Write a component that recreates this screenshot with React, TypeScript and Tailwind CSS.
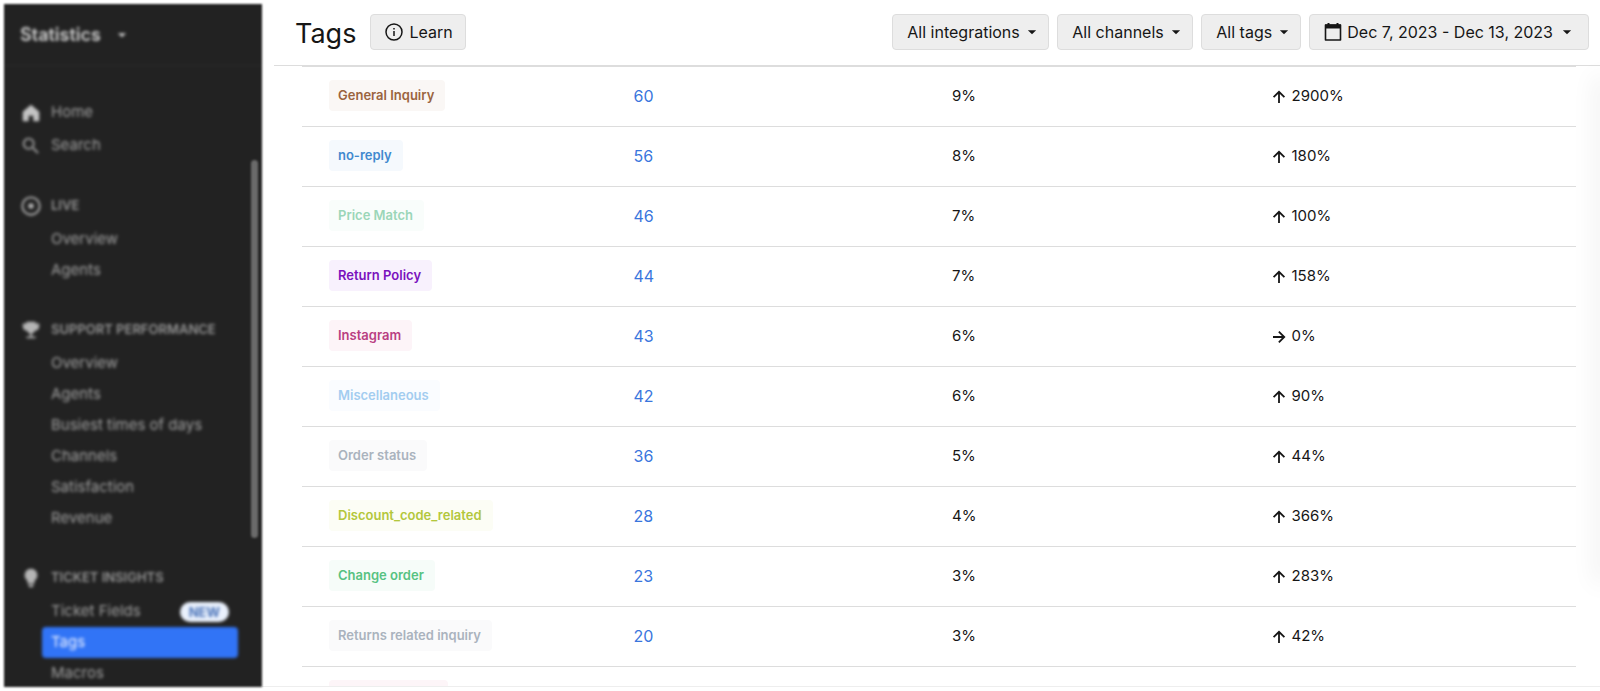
import type { ReactNode } from "react"

type Trend = "up" | "flat"

const tags: { name: string; chip: string; total: number; share: string; trend: Trend; delta: string }[] = [
  { name: "General Inquiry", chip: "text-[#9a6440] bg-[#faf7f5]", total: 60, share: "9%", trend: "up", delta: "2900%" },
  { name: "no-reply", chip: "text-[#4189cf] bg-[#f5f9fd]", total: 56, share: "8%", trend: "up", delta: "180%" },
  { name: "Price Match", chip: "text-[#9bd6b8] bg-[#f9fdfb]", total: 46, share: "7%", trend: "up", delta: "100%" },
  { name: "Return Policy", chip: "text-[#7b12bd] bg-[#f8f1fd]", total: 44, share: "7%", trend: "up", delta: "158%" },
  { name: "Instagram", chip: "text-[#b93f82] bg-[#fdf4f8]", total: 43, share: "6%", trend: "flat", delta: "0%" },
  { name: "Miscellaneous", chip: "text-[#a3cdf0] bg-[#fafcff]", total: 42, share: "6%", trend: "up", delta: "90%" },
  { name: "Order status", chip: "text-[#aab3be] bg-[#fafafb]", total: 36, share: "5%", trend: "up", delta: "44%" },
  { name: "Discount_code_related", chip: "text-[#b3c73c] bg-[#fcfdf5]", total: 28, share: "4%", trend: "up", delta: "366%" },
  { name: "Change order", chip: "text-[#57c282] bg-[#f6fcf9]", total: 23, share: "3%", trend: "up", delta: "283%" },
  { name: "Returns related inquiry", chip: "text-[#aab3be] bg-[#fafafb]", total: 20, share: "3%", trend: "up", delta: "42%" },
]

const CaretIcon = ({ className = "" }: { className?: string }) => (
  <svg viewBox="0 0 24 24" fill="currentColor" className={`size-[18px] shrink-0 ${className}`} aria-hidden="true">
    <path d="M6.5 9.5h11L12 15z" />
  </svg>
)

const ArrowIcon = ({ trend }: { trend: Trend }) => (
  <svg viewBox="0 0 24 24" fill="none" stroke="currentColor" strokeWidth="2.4" className="size-[18px] shrink-0" aria-hidden="true">
    {trend === "up" ? <path d="M12 20V5.5M4.8 12.2 12 5l7.2 7.2" /> : <path d="M4 12h14.5M11.8 4.8 19 12l-7.2 7.2" />}
  </svg>
)

const Glyph = ({ children }: { children: ReactNode }) => (
  <svg viewBox="0 0 24 24" fill="currentColor" className="size-[22px] shrink-0" aria-hidden="true">
    {children}
  </svg>
)

const FilterSelect = ({ label }: { label: string }) => (
  <div className="grid items-center">
    <select aria-label={label} className="col-start-1 row-start-1 h-9 appearance-none rounded border border-[#dddddd] bg-[#eeeeee] pl-3.5 pr-7 text-base">
      <option>{label}</option>
    </select>
    <CaretIcon className="pointer-events-none col-start-1 row-start-1 mr-2 justify-self-end" />
  </div>
)

const NavGroup = ({ title, icon, children }: { title: string; icon: ReactNode; children: ReactNode }) => (
  <section className="mt-[26px]">
    <h2 className="flex h-9 items-center gap-[9px] pl-4 text-[13px] font-semibold text-[#969696]">
      <span className="text-[#b5b5b5]">
        <Glyph>{icon}</Glyph>
      </span>
      {title}
    </h2>
    <ul>{children}</ul>
  </section>
)

const NavItem = ({ label, active, badge }: { label: string; active?: boolean; badge?: string }) => (
  <li className="pl-[38px] pr-6">
    <a
      href="#"
      className={`flex h-[31px] items-center justify-between rounded px-[9px] ${active ? "bg-[#3174f6] text-[#f0f4ff]" : "text-[#a0a0a0]"}`}
    >
      {label}
      {badge && <span className="rounded-full bg-[#eaf1fd] px-[9px] text-[13px] leading-5 font-bold text-[#4a73b8]">{badge}</span>}
    </a>
  </li>
)

const Sidebar = () => (
  <aside className="relative flex w-[258px] shrink-0 flex-col overflow-hidden bg-[#222222] text-[15px] blur-[1px]">
    <button type="button" className="flex h-[62px] w-full shrink-0 items-center gap-3 border-b border-[#2c2c2c] pl-4 text-lg font-semibold text-[#d2d2d2] blur-[1px]">
      Statistics
      <CaretIcon />
    </button>
    <nav className="pt-[30px] blur-[1px]">
      <a href="#" className="flex h-[33px] items-center gap-[9px] pl-4 text-[#a0a0a0]">
        <span className="text-[#c4c4c4]">
          <Glyph>
            <path d="M12 3 3 10.5V21h6.5v-6h5v6H21V10.5z" />
          </Glyph>
        </span>
        Home
      </a>
      <a href="#" className="flex h-[33px] items-center gap-[9px] pl-4 text-[#a0a0a0]">
        <Glyph>
          <path d="M15.5 14h-.8l-.3-.3A6.5 6.5 0 1 0 13.7 14.4l.3.3v.8l5 5 1.5-1.5zM9.5 14a4.5 4.5 0 1 1 0-9 4.5 4.5 0 0 1 0 9z" />
        </Glyph>
        Search
      </a>
      <NavGroup
        title="LIVE"
        icon={
          <>
            <circle cx="12" cy="12" r="9.5" fill="none" stroke="currentColor" strokeWidth="2" />
            <circle cx="12" cy="12" r="3" />
          </>
        }
      >
        <NavItem label="Overview" />
        <NavItem label="Agents" />
      </NavGroup>
      <NavGroup
        title="SUPPORT PERFORMANCE"
        icon={<path d="M19 5h-2V3H7v2H3v3a5 5 0 0 0 4.400 4.900A5 5 0 0 0 11 15.900V19H7v2h10v-2h-4v-3.100a5 5 0 0 0 3.600-3A5 5 0 0 0 21 8V5z" />}
      >
        <NavItem label="Overview" />
        <NavItem label="Agents" />
        <NavItem label="Busiest times of days" />
        <NavItem label="Channels" />
        <NavItem label="Satisfaction" />
        <NavItem label="Revenue" />
      </NavGroup>
      <NavGroup
        title="TICKET INSIGHTS"
        icon={<path d="M12 2a7 7 0 0 0-4 12.7V17a1 1 0 0 0 1 1h6a1 1 0 0 0 1-1v-2.3A7 7 0 0 0 12 2zM9 19h6v1a1 1 0 0 1-1 1v1h-4v-1a1 1 0 0 1-1-1z" />}
      >
        <NavItem label="Ticket Fields" badge="NEW" />
        <NavItem label="Tags" active />
        <NavItem label="Macros" />
      </NavGroup>
    </nav>
    {/* scrollbar */}
    <div className="absolute top-[156px] right-1 h-[378px] w-[7px] rounded-full bg-[#6a6a6a]" />
  </aside>
)

const TopBar = () => (
  <header className="ml-3 flex h-[62px] shrink-0 items-center gap-2 border-b border-[#dddddd] pr-[11px] pb-1.5 pl-[21px]">
    <h1 className="mr-1.5 pt-1 text-[27px] leading-9">Tags</h1>
    <button type="button" className="flex h-9 items-center gap-1.5 rounded border border-[#dddddd] bg-[#eeeeee] pr-3 pl-3.5 text-base">
      <svg viewBox="0 0 18 18" fill="none" stroke="currentColor" strokeWidth="1.5" className="size-[18px]" aria-hidden="true">
        <circle cx="9" cy="9" r="8" />
        <path d="M9 8v5M9 5v1.5" />
      </svg>
      Learn
    </button>
    <div className="ml-auto flex items-center gap-2">
      <FilterSelect label="All integrations" />
      <FilterSelect label="All channels" />
      <FilterSelect label="All tags" />
      <button type="button" className="flex h-9 items-center gap-[5px] rounded border border-[#dddddd] bg-[#eeeeee] pr-3 pl-3.5 text-base">
        <svg viewBox="0 0 18 20" className="h-5 w-[18px]" aria-hidden="true">
          <path d="M1.500 3h15v15h-15z" fill="none" stroke="currentColor" strokeWidth="1.600" strokeLinejoin="round" />
          <path d="M1 2.500h16V6.500H1zM3.500 1h2v2h-2zM12.500 1h2v2h-2z" fill="currentColor" />
        </svg>
        Dec 7, 2023 - Dec 13, 2023
        <CaretIcon />
      </button>
    </div>
  </header>
)

const TagsTable = () => (
  <table aria-label="Tags" className="w-full table-fixed border-t border-[#dddddd] text-[15px]">
    <tbody>
      {tags.map((tag) => (
        <tr key={tag.name} className="h-[60px] border-b border-[#dddddd]">
          <td className="pb-0.5 pl-[27px]">
            <span className={`inline-flex h-[31px] items-center rounded pr-[11px] pl-[9px] text-[13px] font-semibold ${tag.chip}`}>{tag.name}</span>
          </td>
          <td className="pl-[13px]">
            <a href="#" className="text-base text-[#3a76dd]">{tag.total}</a>
          </td>
          <td className="pl-[13px]">{tag.share}</td>
          <td className="pl-3">
            <span className="flex items-center gap-1">
              <ArrowIcon trend={tag.trend} />
              {tag.delta}
            </span>
          </td>
        </tr>
      ))}
      <tr className="h-[60px]">
        <td className="pb-0.5 pl-[27px]" colSpan={4}>
          <span className="block h-[31px] w-[119px] rounded bg-[#fdf5f8]" />
        </td>
      </tr>
    </tbody>
  </table>
)

export default function App() {
  return (
    <div className="relative flex h-screen overflow-hidden bg-white p-1 pr-0 font-['Inter','Liberation_Sans',sans-serif] text-[#161616]">
      <Sidebar />
      <main className="flex min-w-0 flex-1 flex-col overflow-hidden border-b border-[#eeeeee]">
        <TopBar />
        <div className="min-h-0 flex-1 overflow-hidden pr-6 pl-10">
          <TagsTable />
        </div>
      </main>
      <div className="pointer-events-none absolute top-20 -right-1 h-[500px] w-1 shadow-[0_0_24px_4px_rgba(0,0,0,0.08)]" />
    </div>
  )
}
